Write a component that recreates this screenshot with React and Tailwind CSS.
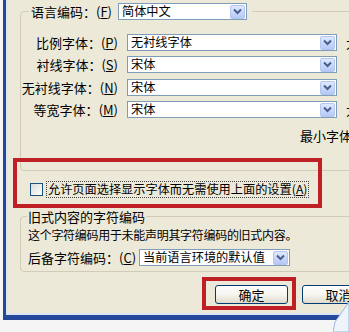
import React from 'react';

const Chevron = () => (
    <svg width="9" height="7" viewBox="0 0 9 7">
        <path d="M1 1.5 L4.5 5 L8 1.5" stroke="#4a5e8c" strokeWidth="2" fill="none" />
    </svg>
);

const Combo = ({ value, className }) => (
    <div className={`flex h-[17px] shrink-0 items-center border border-[#7f9db9] bg-white pl-[3px] pr-px ${className}`}>
        <span className="flex-1 whitespace-nowrap text-[12.2px] leading-[15px]">{value}</span>
        <span className="flex h-[14px] w-[15px] shrink-0 items-center justify-center rounded-[2px] border border-[#b3c6ee] bg-gradient-to-b from-[#dfe8fd] to-[#b5c9f6]">
            <Chevron />
        </span>
    </div>
);

const Key = ({ k }) => (
    <span>
        (<span className="underline">{k}</span>)
    </span>
);

const FontRow = ({ label, k, value, size, className }) => (
    <div className={`flex h-[17px] items-center whitespace-nowrap ${className}`}>
        <span className="w-[97px] shrink-0 text-right leading-[17px]">
            {label}：<Key k={k} />
        </span>
        <Combo value={value} className="ml-[9px] w-[210px]" />
        {size && <span className="ml-[9px] leading-[17px]">大小(Z)：</span>}
    </div>
);

const XpButton = ({ children }) => (
    <button className="flex h-[19px] w-[73px] shrink-0 items-center justify-center rounded-[3px] border border-[#003c74] bg-gradient-to-b from-white via-[#f6f5f0] to-[#dedbcc] leading-[17px]">
        {children}
    </button>
);

export default function App() {
    return (
        <div className="relative h-[332px] w-[349px] overflow-hidden bg-[#f5f5f5] font-['Noto_Sans_CJK_SC','Liberation_Sans',sans-serif] text-[13px] text-black">
            {/* window frame */}
            <div className="ml-[3px] h-[320px] w-[360px] border-b-[5px] border-l-[3px] border-[#24479a]">
                <div className="flex h-full flex-col border-b-2 border-l-2 border-[#dbe5f5] bg-[#ece9d8]">
                    {/* fonts group */}
                    <fieldset className="ml-[12px] mt-[3px] w-[360px] shrink-0 rounded-[4px] border border-[#d0ccb9] pb-[26px]">
                        <legend className="ml-[8px] pl-[2px] pr-[5px]">
                            <div className="flex h-[17px] items-center whitespace-nowrap">
                                <span className="w-[87px] leading-[17px]">
                                    语言编码：<Key k="F" />
                                </span>
                                <Combo value="简体中文" className="w-[129px]" />
                            </div>
                        </legend>
                        <FontRow label="比例字体" k="P" value="无衬线字体" size className="mt-[14px]" />
                        <FontRow label="衬线字体" k="S" value="宋体" className="mt-[5px]" />
                        <FontRow label="无衬线字体" k="N" value="宋体" className="mt-[6px]" />
                        <FontRow label="等宽字体" k="M" value="宋体" size className="mt-[5px]" />
                        <div className="mt-[9px] whitespace-nowrap pl-[279px] leading-[17px]">最小字体大小(O)：</div>
                    </fieldset>

                    {/* allow pages checkbox */}
                    <div className="mt-[10px] flex h-[17px] items-center pl-[22px] whitespace-nowrap">
                        <span className="h-[13px] w-[13px] shrink-0 border border-[#1c5180] bg-gradient-to-br from-[#dcdcd7] to-white" />
                        <span className="ml-[3px] flex h-[17px] items-center border border-dotted border-[#444] px-px text-[12.2px] leading-[15px]">
                            允许页面选择显示字体而无需使用上面的设置<Key k="A" />
                        </span>
                    </div>

                    {/* legacy encoding group */}
                    <fieldset className="ml-[12px] mt-[11px] w-[360px] shrink-0 rounded-[4px] border border-[#d0ccb9] pb-[5px]">
                        <legend className="ml-[6px] px-px leading-[15px]">旧式内容的字符编码</legend>
                        <div className="mt-[3px] whitespace-nowrap pl-[7px] text-[12px] leading-[16px] tracking-[-0.3px]">
                            这个字符编码用于未能声明其字符编码的旧式内容。
                        </div>
                        <div className="mt-[6px] flex h-[17px] items-center whitespace-nowrap pl-[7px]">
                            <span className="w-[111px] shrink-0 leading-[17px]">
                                后备字符编码：<Key k="C" />
                            </span>
                            <Combo value="当前语言环境的默认值" className="w-[151px]" />
                        </div>
                    </fieldset>

                    {/* dialog buttons */}
                    <div className="mt-[13px] flex gap-[14px] pl-[207px]">
                        <XpButton>确定</XpButton>
                        <XpButton>取消</XpButton>
                    </div>
                </div>
            </div>

            {/* red annotation boxes */}
            <div className="absolute left-[13px] top-[158px] h-[50px] w-[309px] border-4 border-[#bf2026]" />
            <div className="absolute left-[202px] top-[277px] h-[33px] w-[94px] border-4 border-[#bf2026]" />

            {/* corner of another window */}
            <svg className="absolute bottom-0 right-0" width="16" height="34" viewBox="0 0 16 34">
                <polygon points="16,4 16,34 0,34 2,24" fill="#eef4fc" stroke="#9bb7e0" strokeWidth="1" />
            </svg>
        </div>
    );
}
